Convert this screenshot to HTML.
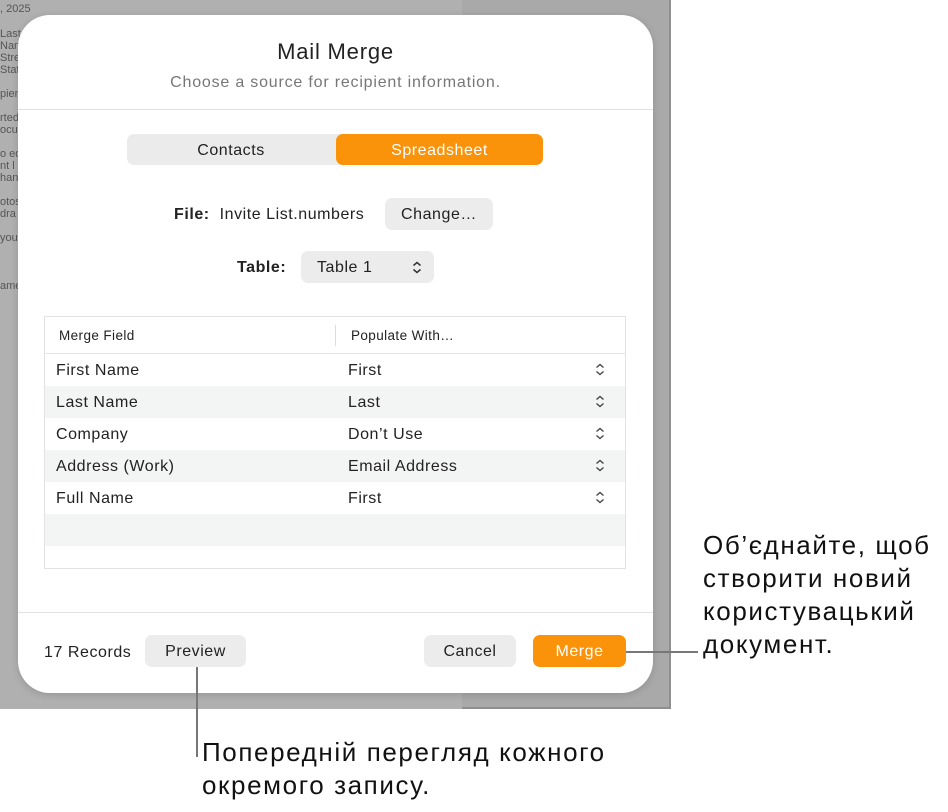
<!DOCTYPE html>
<html><head><meta charset="utf-8"><style>
*{box-sizing:border-box;margin:0;padding:0}
body{width:948px;height:812px;background:#fff;position:relative;font-family:"Liberation Sans",sans-serif;overflow:hidden;color:#222}
.bg{position:absolute;left:0;top:0;width:671px;height:709px;background:#a9a9a9;border-right:2px solid #8f8f8f;border-bottom:2px solid #8f8f8f}
.doc{position:absolute;left:0;top:0;width:462px;height:709px;background:#b0b0b0}
.doct{position:absolute;left:0;font-size:11px;color:#555}
.dlg{position:absolute;left:18px;top:15px;width:635px;height:678px;background:#fff;border-radius:32px;box-shadow:0 2px 8px rgba(0,0,0,.15);letter-spacing:.55px}
.a{position:absolute}
.title{left:0;width:635px;top:24px;text-align:center;font-size:22px;color:#222;letter-spacing:.8px}
.sub{left:0;width:635px;top:59px;text-align:center;font-size:16px;color:#777;letter-spacing:.8px}
.hr{left:0;width:635px;height:1px;background:#e2e2e2}
.seg{left:109px;top:119px;width:416px;height:31px;background:#ebebeb;border-radius:7px}
.btn{background:#ececec;border-radius:7px;text-align:center;font-size:16px;color:#222}
.or{background:#fa930a;color:#fff}
.tbl{left:26px;top:301px;width:582px;height:253px;border:1px solid #e2e2e2}
.row{position:absolute;left:0;width:580px;height:32px;font-size:16px;line-height:34px}
.row span{position:absolute}
.g{background:#f3f4f4}
.ud{position:absolute;right:20px;top:9px}
.ann{position:absolute;font-size:26px;color:#111;line-height:33px;letter-spacing:1.6px}
</style></head><body>
<div class="bg"></div>
<div class="doc">
<div class="doct" style="top:3px">, 2025</div>
<div class="doct" style="top:28px">Last</div><div class="doct" style="top:40px">Nam</div><div class="doct" style="top:52px">Stre</div><div class="doct" style="top:64px">Stat</div>
<div class="doct" style="top:88px">pien</div>
<div class="doct" style="top:112px">rted</div><div class="doct" style="top:124px">ocu</div>
<div class="doct" style="top:148px">o ed</div><div class="doct" style="top:160px">nt l</div><div class="doct" style="top:172px">hang</div>
<div class="doct" style="top:196px">otos</div><div class="doct" style="top:208px">dra</div>
<div class="doct" style="top:232px">you</div>
<div class="doct" style="top:280px">ame</div>
</div>
<div class="dlg">
<div class="a title">Mail Merge</div>
<div class="a sub">Choose a source for recipient information.</div>
<div class="a hr" style="top:94px"></div>
<div class="a seg"><div class="a" style="left:0;width:208px;top:1px;line-height:31px;text-align:center;font-size:16px">Contacts</div>
<div class="a or" style="left:209px;width:207px;top:0;height:31px;line-height:33px;border-radius:7px;text-align:center;font-size:16px">Spreadsheet</div></div>
<div class="a" style="left:156px;top:191px;font-size:16px"><b>File:</b>&nbsp; Invite List.numbers</div>
<div class="a btn" style="left:367px;top:183px;width:108px;height:32px;line-height:34px">Change…</div>
<div class="a" style="left:219px;top:244px;font-size:16px;font-weight:bold">Table:</div>
<div class="a btn" style="left:283px;top:236px;width:133px;height:32px;line-height:34px;text-align:left;padding-left:16px">Table 1
<svg class="ud" style="right:12px;top:10px" width="10" height="13" viewBox="0 0 10 13"><path d="M1.5 4.5L5 1.5L8.5 4.5M1.5 8.5L5 11.5L8.5 8.5" fill="none" stroke="#333" stroke-width="1.5"/></svg></div>
<div class="a tbl">
<div class="row" style="top:0;height:37px;line-height:37px;font-size:13.5px;border-bottom:1px solid #e6e6e6;letter-spacing:.4px"><span style="left:14px">Merge Field</span><span style="left:290px;top:8px;width:1px;height:21px;background:#ddd"></span><span style="left:306px">Populate With…</span></div>
<div class="row" style="top:37px"><span style="left:11px">First Name</span><span style="left:303px">First</span><svg class="ud" width="10" height="13" viewBox="0 0 10 13"><path d="M1.5 4.5L5 1.5L8.5 4.5M1.5 8.5L5 11.5L8.5 8.5" fill="none" stroke="#444" stroke-width="1.4"/></svg></div>
<div class="row g" style="top:69px"><span style="left:11px">Last Name</span><span style="left:303px">Last</span><svg class="ud" width="10" height="13" viewBox="0 0 10 13"><path d="M1.5 4.5L5 1.5L8.5 4.5M1.5 8.5L5 11.5L8.5 8.5" fill="none" stroke="#444" stroke-width="1.4"/></svg></div>
<div class="row" style="top:101px"><span style="left:11px">Company</span><span style="left:303px">Don’t Use</span><svg class="ud" width="10" height="13" viewBox="0 0 10 13"><path d="M1.5 4.5L5 1.5L8.5 4.5M1.5 8.5L5 11.5L8.5 8.5" fill="none" stroke="#444" stroke-width="1.4"/></svg></div>
<div class="row g" style="top:133px"><span style="left:11px">Address (Work)</span><span style="left:303px">Email Address</span><svg class="ud" width="10" height="13" viewBox="0 0 10 13"><path d="M1.5 4.5L5 1.5L8.5 4.5M1.5 8.5L5 11.5L8.5 8.5" fill="none" stroke="#444" stroke-width="1.4"/></svg></div>
<div class="row" style="top:165px"><span style="left:11px">Full Name</span><span style="left:303px">First</span><svg class="ud" width="10" height="13" viewBox="0 0 10 13"><path d="M1.5 4.5L5 1.5L8.5 4.5M1.5 8.5L5 11.5L8.5 8.5" fill="none" stroke="#444" stroke-width="1.4"/></svg></div>
<div class="row g" style="top:197px"></div>
</div>
<div class="a hr" style="top:597px"></div>
<div class="a" style="left:26px;top:629px;font-size:16px">17 Records</div>
<div class="a btn" style="left:127px;top:620px;width:101px;height:32px;line-height:34px">Preview</div>
<div class="a btn" style="left:406px;top:620px;width:92px;height:32px;line-height:34px">Cancel</div>
<div class="a btn or" style="left:515px;top:620px;width:93px;height:32px;line-height:34px">Merge</div>
</div>
<div class="a" style="left:626px;top:651px;width:72px;height:2px;background:#777"></div>
<div class="a" style="left:196px;top:667px;width:2px;height:90px;background:#777"></div>
<div class="ann" style="left:703px;top:529px">Об’єднайте, щоб<br>створити новий<br>користувацький<br>документ.</div>
<div class="ann" style="left:202px;top:736px">Попередній перегляд кожного<br>окремого запису.</div>
</body></html>
